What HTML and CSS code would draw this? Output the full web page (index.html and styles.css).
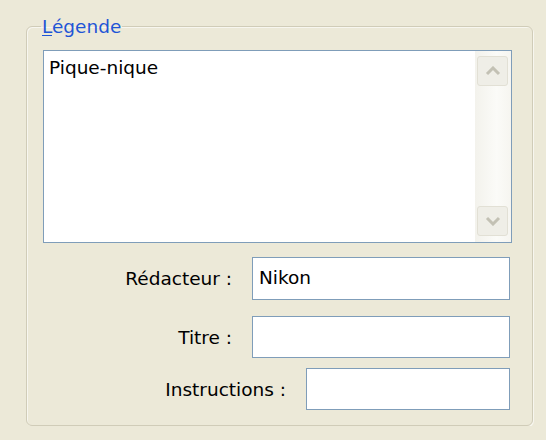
FILE: index.html
```html
<!DOCTYPE html>
<html lang="fr">
<head>
    <meta charset="UTF-8">
    <title>Légende</title>
    <link rel="stylesheet" href="styles.css">
</head>
<body>
    <fieldset class="group">
        <legend><u>L</u>égende</legend>

        <div class="memo">
            <div class="memo-text">Pique-nique</div>
            <div class="scrollbar">
                <div class="scroll-btn">
                    <svg width="16" height="10" viewBox="0 0 16 10"><path d="M2 8 L8 2 L14 8" fill="none" stroke="#c3c1b4" stroke-width="3"/></svg>
                </div>
                <div class="scroll-btn">
                    <svg width="16" height="10" viewBox="0 0 16 10"><path d="M2 2 L8 8 L14 2" fill="none" stroke="#c3c1b4" stroke-width="3"/></svg>
                </div>
            </div>
        </div>

        <div class="row row-first">
            <label>Rédacteur :</label>
            <div class="field">Nikon</div>
        </div>
        <div class="row row-second">
            <label>Titre :</label>
            <div class="field"></div>
        </div>
        <div class="row row-third">
            <label>Instructions :</label>
            <div class="field field-short"></div>
        </div>
    </fieldset>
</body>
</html>
```

FILE: styles.css
```css
* {
    box-sizing: border-box;
}

body {
    margin: 0;
    background: #ece9d8;
    font-family: "DejaVu Sans", Verdana, sans-serif;
    font-size: 18.5px;
    color: #000;
}

.group {
    margin: 16px 0 0 26px;
    width: 507px;
    padding: 13px 20px 15px 16px;
    border: 1px solid #d0ccb8;
    border-radius: 6px;
    box-shadow: inset 1px 1px 0 #f7f6ef, 1px 1px 0 #f7f6ef;
}

.group legend {
    height: 21px;
    line-height: 21px;
    padding: 0 1px;
    margin-left: -2px;
    color: #1f55d6;
}

.group legend u {
    text-decoration-thickness: 1px;
    text-underline-offset: 2px;
}

.memo {
    display: flex;
    height: 193px;
    background: #fff;
    border: 1px solid #7f9db9;
}

.memo-text {
    flex: 1;
    padding: 6px 5px;
    line-height: 22px;
}

.scrollbar {
    width: 36px;
    padding: 5px 3px 6px 2px;
    display: flex;
    flex-direction: column;
    justify-content: space-between;
    background: linear-gradient(to right, #f3f2ec, #fbfbf8 60%, #f6f5f0);
}

.scroll-btn {
    height: 30px;
    display: flex;
    align-items: center;
    justify-content: center;
    background: #efeee7;
    border: 1px solid #e2e0d5;
    border-radius: 3px;
}

.row {
    display: flex;
    justify-content: flex-end;
    align-items: center;
    gap: 20px;
    padding-right: 2px;
}

.row-first {
    margin-top: 14px;
}

.row-second {
    margin-top: 16px;
}

.row-third {
    margin-top: 10px;
}

.field {
    width: 258px;
    height: 42px;
    padding: 0 6px;
    line-height: 40px;
    background: #fff;
    border: 1px solid #7f9db9;
}

.row-first .field {
    height: 43px;
}

.field-short {
    width: 204px;
}
```
